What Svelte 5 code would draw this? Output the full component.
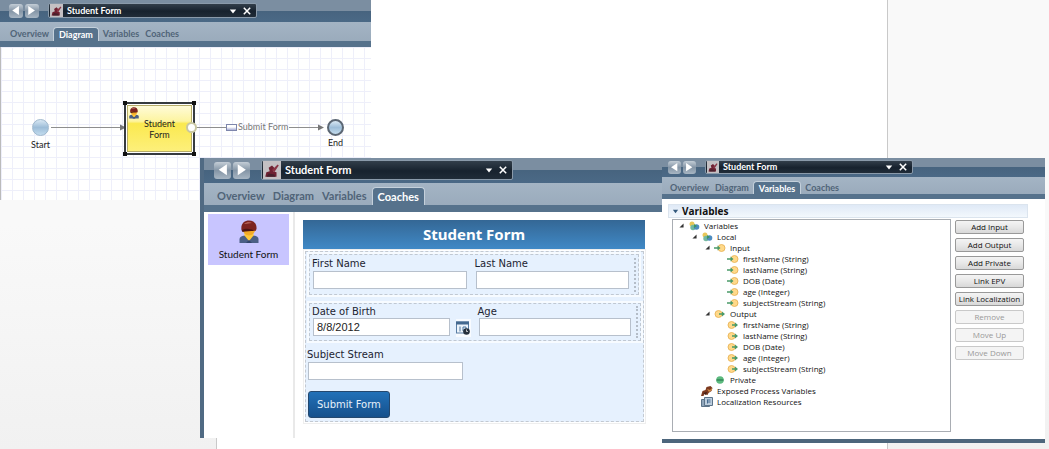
<script>
  const tabs = ['Overview', 'Diagram', 'Variables', 'Coaches'];
  const fields = ['firstName (String)', 'lastName (String)', 'DOB (Date)', 'age (Integer)', 'subjectStream (String)'];
  const tree = [
    { level: 0, open: true, icon: 'vars', text: 'Variables' },
    { level: 1, open: true, icon: 'vars', text: 'Local' },
    { level: 2, open: true, icon: 'in', text: 'Input' },
    ...fields.map((text) => ({ level: 3, icon: 'in', text })),
    { level: 2, open: true, icon: 'out', text: 'Output' },
    ...fields.map((text) => ({ level: 3, icon: 'out', text })),
    { level: 2, icon: 'private', text: 'Private' },
    { level: 1, icon: 'exposed', text: 'Exposed Process Variables' },
    { level: 1, icon: 'resources', text: 'Localization Resources' }
  ];
  const actions = [
    ['Add Input', true],
    ['Add Output', true],
    ['Add Private', true],
    ['Link EPV', true],
    ['Link Localization', true],
    ['Remove', false],
    ['Move Up', false],
    ['Move Down', false]
  ];
</script>

{#snippet person()}
  <svg class="person" viewBox="0 0 20 24" aria-hidden="true">
    <path d="M0.5 23V19c0-2 2-3 5-3.500h9c3 .5 5 1.500 5 3.500v4z" fill="#4b5f85" />
    <path d="M5 15l5 6 5-6-2-2H7z" fill="#ffc93c" />
    <path d="M10 20l-3 3h6z" fill="#33456b" />
    <circle cx="10" cy="9" r="6.500" fill="#f3ab28" />
    <path d="M2.500 10C1.500 3.500 5.500.5 10 .5s8 3 7.500 8.500l-1 2c-4-1.500-8-2-14-1z" fill="#7c2320" />
    <path d="M5 4c2-2 6-2.500 8-1-3 0-5 1-8 1z" fill="#c27163" />
    <path d="M2.500 10c4-2 10-1.500 13 1-4 0-9 0-12 1z" fill="#4c1414" />
  </svg>
{/snippet}

{#snippet chrome(active)}
  <header class="bar">
    <button class="nav" aria-label="Back"><svg viewBox="0 0 10 10"><path d="M8 1v8L2 5z" fill="#fff" /></svg></button>
    <button class="nav" aria-label="Forward"><svg viewBox="0 0 10 10"><path d="M2 1v8l6-4z" fill="#fff" /></svg></button>
    <div class="title">
      <svg class="emblem" viewBox="0 0 16 16" aria-hidden="true">
        <rect width="16" height="16" fill="#c4c0c3" />
        <path d="M2 14l1-4 3-1-1-3 3-2 2 2-1 3 3 1v4z" fill="#6f2132" />
        <path d="M8 8l5-5 1 1-4 6z" fill="#8a3344" />
        <path d="M3 14l2-3 5 1 1 2z" fill="#47202c" />
      </svg>
      <span class="name">Student Form</span>
      <button class="tool" aria-label="Open list"><svg viewBox="0 0 10 10"><path d="M1 3h8L5 8z" fill="#fff" /></svg></button>
      <button class="tool" aria-label="Close"><svg viewBox="0 0 10 10"><path d="M1 1l8 8M9 1L1 9" stroke="#fff" stroke-width="1.900" /></svg></button>
    </div>
  </header>
  <nav class="tabs">
    {#each tabs as tab}
      <button class="tab" class:active={tab === active}>{tab}</button>
    {/each}
  </nav>
{/snippet}

{#snippet treeIcon(kind)}
  <svg class="ticon" viewBox="0 0 12 10" aria-hidden="true">
    {#if kind === 'vars'}
      <circle cx="4" cy="3" r="2.500" fill="#e8c75a" />
      <circle cx="5" cy="6.500" r="2.700" fill="#74b9a0" />
      <circle cx="8.500" cy="6" r="2.800" fill="#4d8cc0" />
      <path d="M6 3l3 2-3 2z" fill="#3e9560" />
    {:else if kind === 'in'}
      <circle cx="7.500" cy="5" r="3.500" fill="#ffd98a" stroke="#e6ad4d" stroke-width=".8" />
      <path d="M0 4.300h3.500V2.500L6.500 5l-3 2.500V5.700H0z" fill="#4a9a68" />
    {:else if kind === 'out'}
      <circle cx="4.500" cy="5" r="3.500" fill="#ffd98a" stroke="#e6ad4d" stroke-width=".8" />
      <path d="M5 4.300h3V2.500L11 5 8 7.500V5.700H5z" fill="#4a9a68" />
    {:else if kind === 'private'}
      <circle cx="6" cy="5" r="3.800" fill="#5cba7f" />
      <path d="M2.500 5h7" stroke="#2d7f51" stroke-width="1.300" />
    {:else if kind === 'exposed'}
      <path d="M0 10l1.500-5 3-1 1-3 4-1 2 2-1 3-3 2-1 2-3-1-1 2z" fill="#7c3a20" />
      <path d="M6 3l3 1 2-2v2L8 6z" fill="#d18a43" />
      <path d="M2 7l4-1-1 3z" fill="#462117" />
    {:else}
      <path d="M.5 2.500h8v7h-8z" fill="#8fa5ba" stroke="#5b7288" />
      <path d="M3.500.5h8v8h-8z" fill="#bccddd" stroke="#5b7288" />
      <path d="M6.500 2.500v4M6.500 3h3M6.500 5h3" stroke="#466b90" />
    {/if}
  </svg>
{/snippet}

<main class="desktop">
  <div class="page"></div>

  <section class="window flow" aria-label="Diagram">
    {@render chrome('Diagram')}
    <div class="canvas">
      <svg class="links" aria-hidden="true">
        <path d="M50 80.500h70M195 80.500h30M288 80.500h31" stroke="#8e8e8e" />
        <path d="M119 77.500v6l6-3zM317 77.500v6l6-3z" fill="#777" />
      </svg>
      <div class="node start"><i class="ball"></i>Start</div>
      <div class="node task">
        <i class="grip tl"></i><i class="grip tr"></i><i class="grip bl"></i><i class="grip br"></i>
        {@render person()}
        <span>Student<br />Form</span>
        <i class="port"></i>
      </div>
      <div class="linkname"><i></i>Submit Form</div>
      <div class="node end"><i class="ball"></i>End</div>
    </div>
  </section>

  <section class="window coach" aria-label="Coaches">
    {@render chrome('Coaches')}
    <div class="body">
      <aside>
        <button class="tile">{@render person()}Student Form</button>
      </aside>
      <form onsubmit={(e) => e.preventDefault()}>
        <h1>Student Form</h1>
        <div class="sheet">
          <div class="group">
            <label>First Name<input type="text" /></label>
            <label>Last Name<input type="text" /></label>
          </div>
          <div class="group dates">
            <label class="date">Date of Birth<input type="text" value="8/8/2012" /></label>
            <button class="cal" type="button" aria-label="Choose date">
              <svg viewBox="0 0 14 14">
                <rect x=".5" y="1" width="12" height="11" fill="#edf4fb" stroke="#587da4" />
                <path d="M0 .5h13v3H0z" fill="#44698f" />
                <path d="M4 5.500v5M7 6h3v4H7z" stroke="#4b749d" fill="none" />
                <circle cx="10.500" cy="10.500" r="3.300" fill="#25303d" />
                <path d="M10.500 8.500v2h1.500" stroke="#fff" stroke-width=".7" fill="none" />
              </svg>
            </button>
            <label class="age">Age<input type="text" /></label>
          </div>
          <div class="single">
            <label>Subject Stream<input type="text" /></label>
            <button class="submit">Submit Form</button>
          </div>
        </div>
      </form>
    </div>
  </section>

  <section class="window vars" aria-label="Variables">
    {@render chrome('Variables')}
    <div class="pane">
      <h2><svg viewBox="0 0 8 8" aria-hidden="true"><path d="M1 2h6L4 6z" fill="#34597c" /></svg>Variables</h2>
      <div class="columns">
        <ul class="tree">
          {#each tree as row}
            <li class="l{row.level}">
              <svg class="twist" viewBox="0 0 6 6" aria-hidden="true">{#if row.open}<path d="M5.500 .5v5h-5z" fill="#333" />{/if}</svg>
              {@render treeIcon(row.icon)}<span>{row.text}</span>
            </li>
          {/each}
        </ul>
        <div class="actions">
          {#each actions as [text, on]}
            <button disabled={!on}>{text}</button>
          {/each}
        </div>
      </div>
    </div>
  </section>
</main>

<style>
  :global(body) { margin: 0; }
  * { box-sizing: border-box; }
  button { font: inherit; color: inherit; margin: 0; padding: 0; border: 0; background: none; }
  svg { display: block; }

  .desktop {
    position: relative;
    height: 100vh;
    overflow: hidden;
    background: linear-gradient(#f9f9f9 50%, #f1f1f1);
    font-family: "Open Sans", "Noto Sans", sans-serif;
    color: #222;
  }
  .page {
    height: 100%;
    margin: 0 161px 0 216px;
    background: #fff;
    border: solid #c9c9c9;
    border-width: 0 1px;
  }
  .window { position: absolute; display: flex; flex-direction: column; background: #fff; }

  .bar {
    display: flex;
    align-items: center;
    flex: none;
    height: var(--bar);
    padding: 0 0 1px var(--inset);
    gap: 2px;
    background: linear-gradient(#7b8ea1 50%, #47647f 50%, #4b6986);
  }
  .nav {
    width: var(--nav);
    height: var(--nav);
    display: grid;
    place-items: center;
    border-radius: 3px;
    background: linear-gradient(#c3cdd6, #8495a6 50%, #a8b6c3);
  }
  .nav svg { width: 80%; }
  .title {
    display: flex;
    align-items: center;
    gap: 4px;
    width: var(--title);
    height: var(--titleh);
    margin-left: 7px;
    padding: 0 3px 0 1px;
    border: 1px solid #8a9aaa;
    border-radius: 2px;
    background: linear-gradient(#323e4a, #17222e 55%, #202c38);
    color: #fff;
    font: bold var(--font) Lato, sans-serif;
  }
  .emblem { height: 100%; aspect-ratio: 1; }
  .name { flex: 1; line-height: 12px; }
  .tool svg { width: 8px; height: 8px; margin-right: 2px; }
  .tabs {
    display: flex;
    align-items: flex-end;
    flex: none;
    height: var(--tabs);
    padding-left: 7px;
    border-bottom: var(--strip) solid #56728c;
    background: linear-gradient(#a4b4c4, #9aabbc);
    font: bold var(--font) Lato, sans-serif;
    color: #506478;
  }
  .tab { height: var(--tabh); line-height: var(--tabh); padding: 0 var(--tabpad); }
  .tab.active {
    margin: 0 1px;
    padding: 0 5px;
    border: 1px solid #c4d0db;
    border-bottom: 0;
    border-radius: 4px 4px 0 0;
    background: #56728c;
    color: #fff;
  }

  .flow {
    --bar: 22px; --inset: 9px; --nav: 14px; --title: 209px; --titleh: 15px;
    --font: 9px; --tabs: 25px; --strip: 6px; --tabh: 14px; --tabpad: 3px;
    left: 0; top: 0; width: 371px; height: 200px;
  }
  .canvas {
    position: relative;
    flex: 1;
    border-left: 1px solid #bbb;
    background:
      repeating-linear-gradient(90deg, #eeeffa 0 1px, transparent 1px 11px),
      repeating-linear-gradient(#eeeffa 0 1px, transparent 1px 11px), #fff;
    font: 9px Lato, sans-serif;
  }
  .links { position: absolute; inset: 0; width: 100%; height: 100%; }
  .node { position: absolute; display: flex; flex-direction: column; align-items: center; line-height: 11px; }
  .ball {
    width: 17px;
    height: 17px;
    margin-bottom: 3px;
    border: 1px solid #9fb8cd;
    border-radius: 50%;
    background: linear-gradient(#d9e8f4, #9dbdd8 50%, #c3dcef);
  }
  .start { left: 30px; top: 72px; }
  .end { left: 326px; top: 72px; }
  .end .ball { border: 2px solid #5b6673; margin-bottom: 1px; }
  .task {
    left: 123px;
    top: 55px;
    width: 71px;
    height: 53px;
    justify-content: center;
    border: 2px solid #363a3f;
    background: linear-gradient(#fffce0, #fdf4a0 35%, #fbe94f 40%, #fdf07e);
    box-shadow: inset 0 0 0 1px #fff, inset 0 0 0 2px #b6ac69;
    text-align: center;
  }
  .task .person { position: absolute; left: 3px; top: 3px; width: 10px; height: 12px; }
  .grip { position: absolute; width: 4px; height: 4px; background: #111; }
  .tl { left: -3px; top: -3px; }
  .tr { right: -3px; top: -3px; }
  .bl { left: -3px; bottom: -3px; }
  .br { right: -3px; bottom: -3px; }
  .port {
    position: absolute;
    right: -4px;
    top: 18px;
    width: 11px;
    height: 11px;
    border: 2px solid #c9c7a2;
    border-radius: 50%;
    background: #fff;
  }
  .linkname { position: absolute; left: 225px; top: 74px; display: flex; align-items: center; gap: 1px; line-height: 12px; color: #777; }
  .linkname i { width: 11px; height: 7px; border: 1px solid #7e86ac; background: linear-gradient(#fff 40%, #a9aed6); }

  .coach {
    --bar: 25px; --inset: 10px; --nav: 17px; --title: 252px; --titleh: 20px;
    --font: 11px; --tabs: 29px; --strip: 7px; --tabh: 18px; --tabpad: 4px;
    left: 200px; top: 158px; width: 462px; height: 280px;
    border-left: 4px solid #506a83;
  }
  .coach .tabs { padding-left: 9px; }
  .coach .title { margin-left: 9px; }
  .body { display: flex; flex: 1; }
  aside { width: 91px; padding: 2px 4px; border-right: 2px solid #e9e9e9; }
  .tile {
    display: flex;
    flex-direction: column;
    align-items: center;
    gap: 3px;
    width: 100%;
    height: 51px;
    padding-top: 6px;
    background: #c8c5ff;
    font: 10px/14px Lato, sans-serif;
    white-space: nowrap;
    color: #111;
  }
  .tile .person { width: 20px; height: 24px; }
  form { flex: 1; padding: 8px 17px 0 8px; font-family: "DejaVu Sans", sans-serif; font-size: 10px; }
  h1 {
    margin: 0 0 2px;
    background: linear-gradient(#346795, #4089c6);
    color: #fff;
    font: bold 15px/29px "Noto Sans", sans-serif;
    text-align: center;
  }
  .sheet { border: 1px dashed #c3c9d1; outline: 1px solid #eee; outline-offset: 1px; margin: 0 1px 0 2px; height: 171px; background: #e6f1fe; }
  .group {
    display: flex;
    gap: 9px;
    height: 41px;
    margin: 2px 4px 0 3px;
    padding: 3px 0 0 2px;
    border: 1px dashed #c0c8d2;
    outline: 2px solid #f7fbff;
  }
  .group::after { content: ""; width: 5px; margin: 0 2px 2px -8px; border-right: 2px dotted #b4bdc8; }
  .dates { margin-top: 8px; margin-right: 2px; height: 38px; padding-top: 2px; gap: 7px; }
  .dates::after { margin-left: -6px; }
  label { display: block; flex: 1; line-height: 12px; color: #1c2431; }
  input {
    display: block;
    width: 100%;
    height: 18px;
    margin: 1px 0 0 1px;
    padding: 0 3px;
    border: 1px solid #b7c0cc;
    background: #fff;
    font: 11px "Liberation Sans", sans-serif;
    color: #222;
  }
  .dates input { margin-top: 0; }
  .date { flex: 137 0 0; }
  .age { flex: 153 0 0; }
  .cal { align-self: flex-end; width: 15px; height: 18px; margin-bottom: 3px; background: #f8fbff; }
  .cal svg { width: 14px; height: 14px; }
  .single { padding: 8px 0 0 1px; }
  .single label { width: 155px; }
  .submit {
    height: 27px;
    margin: 11px 0 0 1px;
    padding: 0 8px;
    border: 1px solid #24486e;
    border-radius: 3px;
    background: linear-gradient(#2271b8, #15508c);
    color: #e6f0fa;
  }

  .vars {
    --bar: 19px; --inset: 6px; --nav: 13px; --title: 208px; --titleh: 14px;
    --font: 9px; --tabs: 22px; --strip: 5px; --tabh: 13px; --tabpad: 3px;
    left: 662px; right: 4px; top: 158px; height: 285px;
    border-bottom: 4px solid #4d667c;
  }
  .vars .tabs { padding-left: 5px; }
  .pane { flex: 1; display: flex; flex-direction: column; padding: 5px 17px 7px 6px; }
  h2 {
    display: flex;
    align-items: center;
    gap: 3px;
    margin: 0 0 1px;
    padding-left: 3px;
    border: 1px solid #dbe4ee;
    background: linear-gradient(#dfe9f6, #f3f8fd);
    color: #111;
    font: bold 10px/12px "Open Sans", sans-serif;
  }
  h2 svg { width: 7px; height: 7px; }
  .columns { display: flex; flex: 1; gap: 4px; padding: 0 4px; }
  .tree { flex: 1; margin: 0; padding: 0 0 0 6px; list-style: none; border: 1px solid #a9adb3; font-size: 8px; line-height: 11px; color: #111; }
  li { display: flex; align-items: center; gap: 4px; height: 11px; }
  .l1 { padding-left: 13px; }
  .l2 { padding-left: 26px; }
  .l3 { padding-left: 39px; }
  .twist { width: 5px; height: 5px; }
  .ticon { width: 12px; height: 10px; }
  .actions { display: flex; flex-direction: column; gap: 4px; width: 69px; padding-top: 1px; }
  .actions button {
    height: 14px;
    border: 1px solid #999;
    border-radius: 2px;
    background: linear-gradient(#f4f4f4, #e8e8e8 50%, #d8d8d8);
    font-size: 8px;
    line-height: 12px;
    white-space: nowrap;
    color: #111;
  }
  .actions button:disabled { border-color: #c9c9c9; background: #f4f4f4; color: #999; }
</style>
